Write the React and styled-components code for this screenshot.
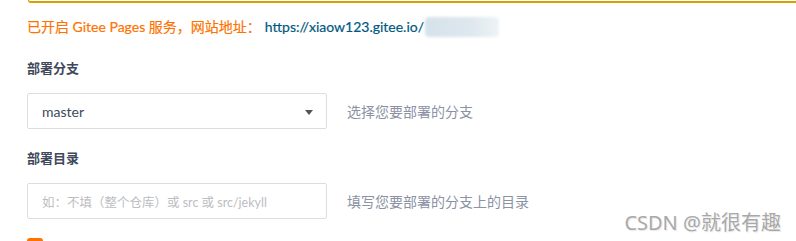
import React from "react";
import styled, { createGlobalStyle } from "styled-components";

const Global = createGlobalStyle`
  html, body { margin: 0; padding: 0; background: #fff; }
  body { font-family: Lato, "Noto Sans CJK SC", sans-serif; overflow: hidden; }
`;

const Page = styled.div`
  position: relative;
  width: 796px;
  height: 241px;
  overflow: hidden;
  padding-left: 27px;
  box-sizing: border-box;
`;

const NoticeEdge = styled.div`
  height: 1px;
  margin-left: 1px;
  border-left: 1px solid #d99e00;
  border-bottom: 2px solid #d99e00;
  border-bottom-left-radius: 3px;
`;

const Message = styled.div`
  margin-top: 14px;
  font-size: 14px;
  line-height: 20px;
  color: #fe7300;
  white-space: nowrap;
  display: flex;
  align-items: center;
  -webkit-text-stroke: 0.2px #fe7300;
`;

const Link = styled.a`
  color: #005980;
  text-decoration: none;
  margin-left: 4px;
  -webkit-text-stroke: 0.2px #005980;
`;

const Smudge = styled.span`
  display: inline-block;
  width: 74px;
  height: 20px;
  margin-left: 1px;
  background: linear-gradient(90deg, #d6e2ea, #dde7ee 60%, #eef3f6);
  filter: blur(1.5px);
  border-radius: 4px;
`;

const Group = styled.div`
  margin-top: ${(p) => p.$top}px;
`;

const Label = styled.div`
  font-size: 13px;
  line-height: 20px;
  font-weight: 700;
  color: #40485b;
`;

const Row = styled.div`
  display: flex;
  align-items: center;
  gap: 20px;
  margin-top: 15px;
`;

const Field = styled.div`
  position: relative;
  width: 300px;
  height: 36px;
  box-sizing: border-box;
  border: 1px solid #dcdde0;
  border-radius: 2px;
  display: flex;
  align-items: center;
  padding: 0 13px 0 14px;
  font-size: ${(p) => (p.$placeholder ? 12.5 : 14)}px;
  color: ${(p) => (p.$placeholder ? "#bcbdc2" : "#40485b")};
  justify-content: space-between;
`;

const Hint = styled.span`
  font-size: 14px;
  color: #8c92a4;
`;

const Caret = styled.svg`
  width: 8px;
  height: 5px;
  margin-top: 3px;
`;

const Checkbox = styled.div`
  margin-top: 19px;
  width: 16px;
  height: 16px;
  border-radius: 3px;
  background: #fe7300;
`;

const Watermark = styled.div`
  position: absolute;
  right: 15px;
  bottom: 5px;
  font-size: 20px;
  color: #a8a8a8;
  text-shadow: 0 0 1px #fff, 1px 1px 1px #e6e6e6;
  font-family: "Noto Sans", "Noto Sans CJK SC", sans-serif;
`;

export default function App() {
  return (
    <>
      <Global />
      <Page>
        <NoticeEdge />
        <Message>
          已开启 Gitee Pages 服务，网站地址：
          <Link href="#">https://xiaow123.gitee.io/</Link>
          <Smudge />
        </Message>
        <Group $top={21}>
          <Label>部署分支</Label>
          <Row>
            <Field>
              master
              <Caret viewBox="0 0 8 5">
                <path d="M0 0 H8 L4 5 Z" fill="#555" />
              </Caret>
            </Field>
            <Hint>选择您要部署的分支</Hint>
          </Row>
        </Group>
        <Group $top={19}>
          <Label>部署目录</Label>
          <Row>
            <Field $placeholder>如：不填（整个仓库）或 src 或 src/jekyll</Field>
            <Hint>填写您要部署的分支上的目录</Hint>
          </Row>
        </Group>
        <Checkbox />
        <Watermark>CSDN @就很有趣</Watermark>
      </Page>
    </>
  );
}
